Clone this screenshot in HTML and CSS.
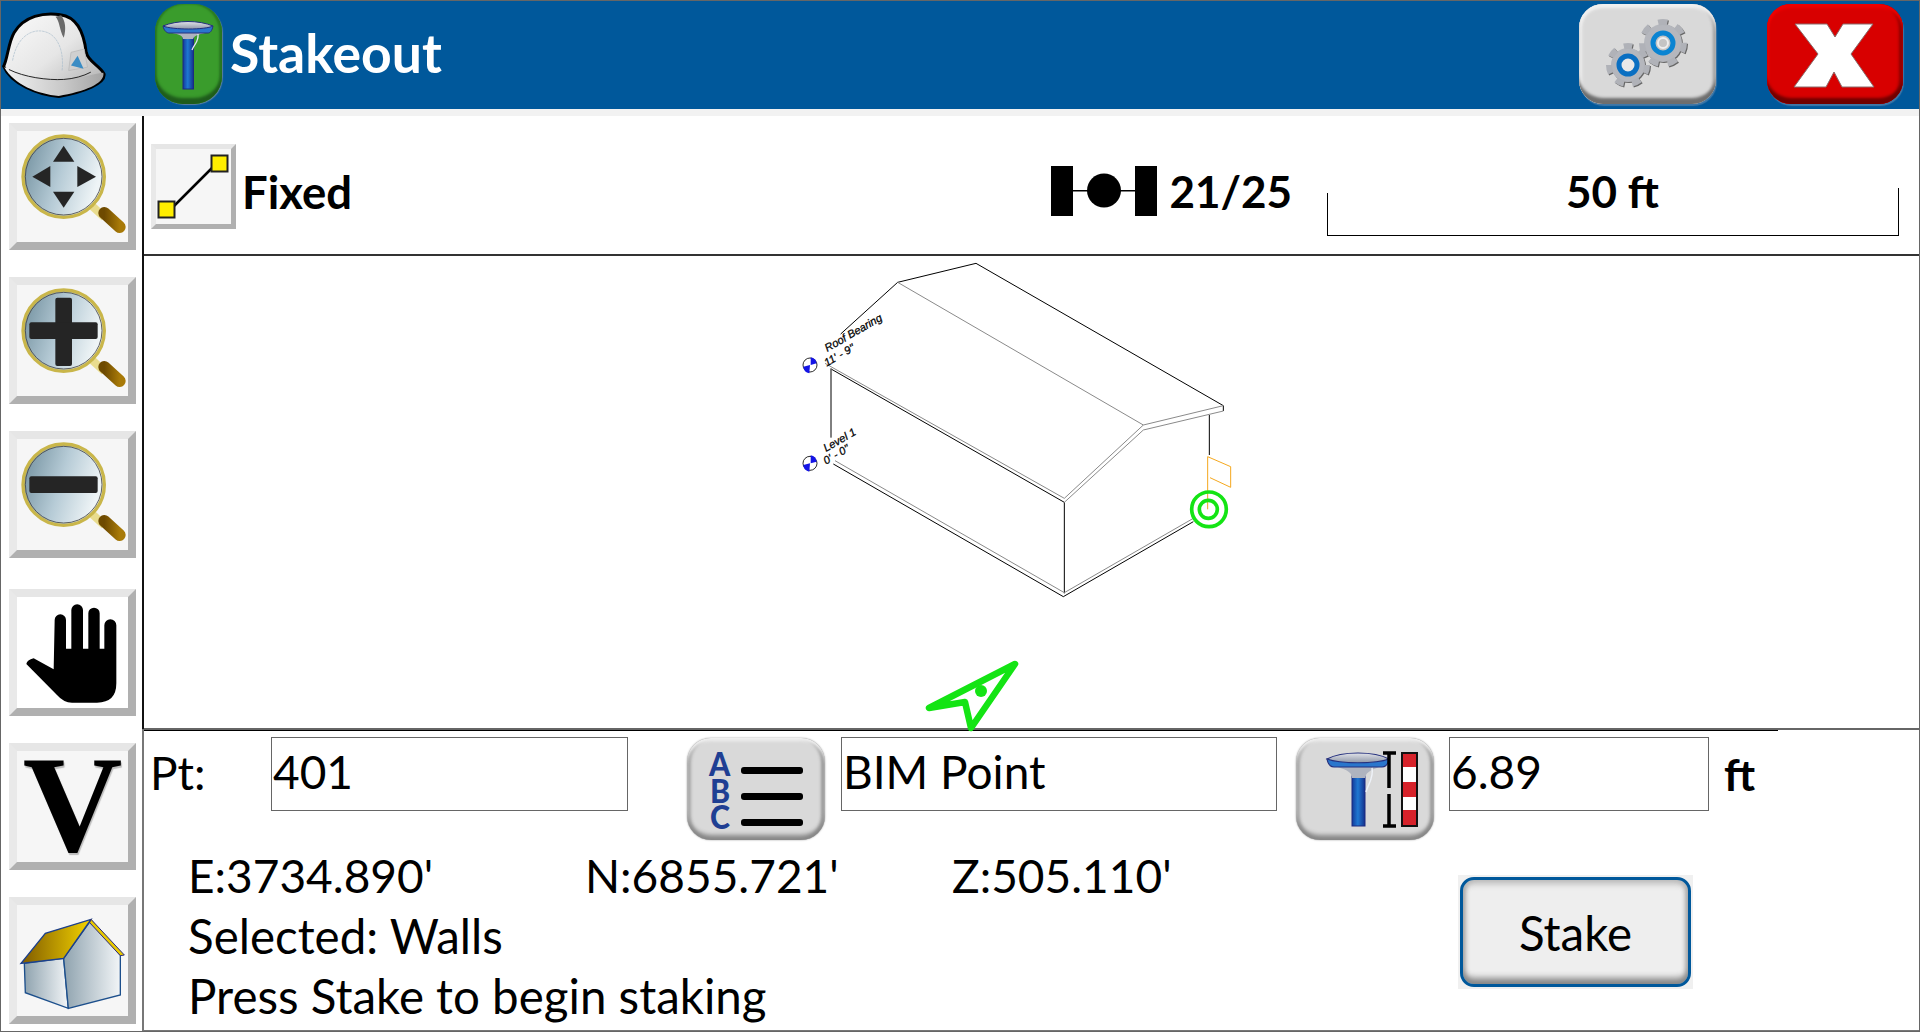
FILE: index.html
```html
<!DOCTYPE html>
<html lang="en">
<head>
    <meta charset="UTF-8">
    <title>Stakeout</title>
    <link rel="stylesheet" href="styles.css">
</head>
<body>
<div class="app">
    <header class="topbar">
        <!-- hard hat -->
        <svg class="helmet" viewBox="0 20 318 270">
            <defs>
                <linearGradient id="hatGrad" x1="0" y1="0" x2="1" y2="1">
                    <stop offset="0" stop-color="#fbfbfb"/>
                    <stop offset="0.5" stop-color="#e6e6e6"/>
                    <stop offset="1" stop-color="#a8a8a8"/>
                </linearGradient>
                <linearGradient id="brimGrad" x1="0" y1="0" x2="1" y2="0">
                    <stop offset="0" stop-color="#f2f2f2"/>
                    <stop offset="0.6" stop-color="#c8c8c8"/>
                    <stop offset="1" stop-color="#a4a4a4"/>
                </linearGradient>
                <linearGradient id="lensGrad" x1="0" y1="0" x2="1" y2="0.3">
                    <stop offset="0" stop-color="#6c8b9a"/>
                    <stop offset="0.55" stop-color="#b6cbd6"/>
                    <stop offset="1" stop-color="#eef4f6"/>
                </linearGradient>
                <linearGradient id="handleGrad" x1="0" y1="0" x2="1" y2="0">
                    <stop offset="0" stop-color="#6e4a00"/>
                    <stop offset="1" stop-color="#a87a08"/>
                </linearGradient>
                <linearGradient id="poleGrad" x1="0" y1="0" x2="1" y2="0">
                    <stop offset="0" stop-color="#123a9a"/>
                    <stop offset="0.45" stop-color="#1f78d2"/>
                    <stop offset="1" stop-color="#14308c"/>
                </linearGradient>
                <linearGradient id="dishGrad" x1="0" y1="0" x2="0" y2="1">
                    <stop offset="0" stop-color="#e2e4ea"/>
                    <stop offset="1" stop-color="#8f97a8"/>
                </linearGradient>
                <linearGradient id="roofGrad" x1="0" y1="0" x2="1" y2="0">
                    <stop offset="0" stop-color="#7f5a00"/>
                    <stop offset="1" stop-color="#f4d400"/>
                </linearGradient>
                <linearGradient id="wallGrad" x1="0" y1="0" x2="1" y2="0">
                    <stop offset="0" stop-color="#8fa3af"/>
                    <stop offset="1" stop-color="#f2f5f7"/>
                </linearGradient>
                <symbol id="lens" viewBox="0 0 333 333">
                    <path d="M222 222 L262 259" stroke="#e9dc8e" stroke-width="24"/>
                    <path d="M262 246 L308 288" stroke="url(#handleGrad)" stroke-width="36" stroke-linecap="round"/>
                    <circle cx="140" cy="137" r="122" fill="url(#lensGrad)" stroke="#c9b64a" stroke-width="10"/>
                    <circle cx="140" cy="137" r="115" fill="none" stroke="#444" stroke-width="2.5"/>
                </symbol>
            </defs>
            <path d="M8 192 C20 170 22 120 40 90 C70 40 130 28 180 36 C225 42 250 80 258 150 C265 180 300 190 312 215 C318 245 250 270 175 284 C110 278 30 245 8 192 Z" fill="url(#hatGrad)" stroke="#000" stroke-width="9"/>
            <path d="M24 200 C70 225 140 235 190 232 C240 228 280 215 310 212 C316 245 250 270 175 282 C110 276 40 248 10 195 Z" fill="url(#brimGrad)"/>
            <path d="M24 202 C70 225 140 235 190 232 C220 230 250 222 272 210" fill="none" stroke="#222" stroke-width="3"/>
            <path d="M165 42 C178 55 176 80 190 106 C198 80 195 55 182 38 Z" fill="#6a6a6a"/>
            <path d="M35 175 C50 90 110 70 150 95 C180 115 190 160 185 205" fill="none" stroke="#a8bccb" stroke-width="2" stroke-dasharray="8 2"/>
            <path d="M205 205 L212 150 L252 140 L262 195 Z" fill="#d0d0d0" stroke="#b4b4b4" stroke-width="2"/>
            <path d="M212 190 L232 160 L250 200 Z" fill="#3a8cc4"/>
        </svg>

        <div class="btn-3d btn-green">
            <svg class="rod-icon" viewBox="0 0 67 100">
                <rect x="28" y="33" width="10.5" height="52" fill="url(#poleGrad)" stroke="#1c2a80" stroke-width="1"/>
                <path d="M13 28 C22 30 28 31 28 35 L38 35 C39 31 46 30 54 28 Z" fill="#aeb3bf"/>
                <path d="M8 22 C9 27 12 29 14 29 L53 29 C55 29 57 27 58 22 Z" fill="#2a76cc" stroke="#25307e" stroke-width="1"/>
                <path d="M8 22 C22 16 44 16 58 22 C50 26 18 26 8 22 Z" fill="url(#dishGrad)" stroke="#25307e" stroke-width="1"/>
                <path d="M43 30 C44 38 39 40 37 46" fill="none" stroke="#e0e6f0" stroke-width="1.3"/>
            </svg>
        </div>
        <h1 class="title">Stakeout</h1>

        <div class="btn-3d btn-gear">
            <svg class="gear-icon" viewBox="0 0 137 100">
                <circle cx="49" cy="61" r="17" fill="#b5b7bd"/>
                <circle cx="49" cy="61" r="19" fill="none" stroke="#b0b2b8" stroke-width="6" pathLength="70" stroke-dasharray="5 5"/>
                <circle cx="49" cy="61" r="9" fill="#e8e8e8" stroke="#0a6fc2" stroke-width="5"/>
                <circle cx="84" cy="39" r="19" fill="#b5b7bd"/>
                <circle cx="84" cy="39" r="21" fill="none" stroke="#b0b2b8" stroke-width="6" pathLength="80" stroke-dasharray="5.7 5.7"/>
                <circle cx="84" cy="39" r="10" fill="#c4c4c4" stroke="#0a84d2" stroke-width="5"/>
                <circle cx="84" cy="39" r="5" fill="none" stroke="#eee" stroke-width="2"/>
            </svg>
        </div>
        <div class="btn-3d btn-close">
            <svg class="close-icon" viewBox="0 0 136 100">
                <polygon points="28,20 60,20 68,33 76,20 106,20 84,50 107,83 75,83 67,68 59,83 27,83 51,50" fill="#fff" stroke="#8a6a6a" stroke-width="1"/>
            </svg>
        </div>
    </header>
    <div class="strip"></div>

    <div class="main">
        <aside class="sidebar">
            <div class="tool">
                <svg class="tool-svg" viewBox="0 0 333 333">
                    <use href="#lens"/>
                    <g fill="#252525">
                        <polygon points="140,44 108,92 172,92"/>
                        <polygon points="140,230 108,182 172,182"/>
                        <polygon points="46,137 100,105 100,168"/>
                        <polygon points="237,137 181,105 181,168"/>
                    </g>
                </svg>
            </div>
            <div class="tool tool-2">
                <svg class="tool-svg" viewBox="0 0 333 333">
                    <use href="#lens"/>
                    <rect x="115" y="38" width="50" height="205" rx="6" fill="#252525"/>
                    <rect x="37" y="112" width="205" height="50" rx="6" fill="#252525"/>
                </svg>
            </div>
            <div class="tool tool-3">
                <svg class="tool-svg" viewBox="0 0 333 333">
                    <use href="#lens"/>
                    <rect x="37" y="112" width="205" height="50" rx="6" fill="#252525"/>
                </svg>
            </div>
            <div class="tool tool-4 tool-white">
                <svg class="tool-svg" viewBox="50 1011 333 333">
                    <path d="M78 1212 Q80 1200 100 1195 L160 1228 L163 1080 a17 17 0 0 1 34 0 L197 1166 L213 1166 L213 1050 a17.5 17.5 0 0 1 35 0 L248 1166 L264 1166 L264 1060 a17 17 0 0 1 34 0 L298 1166 L312 1166 L312 1096 a18 18 0 0 1 36 0 L348 1270 Q348 1328 290 1328 L215 1328 Q190 1328 170 1305 Z" fill="#000"/>
                </svg>
            </div>
            <div class="tool tool-5"><span class="v-letter">V</span></div>
            <div class="tool tool-6">
                <svg class="tool-svg" viewBox="50 525 333 333">
                    <polygon points="72,700 190,685 204,835 75,788" fill="url(#wallGrad)" stroke="#1c4f8c" stroke-width="4"/>
                    <polygon points="190,685 272,570 360,675 360,795 204,835" fill="url(#wallGrad)" stroke="#1c4f8c" stroke-width="4"/>
                    <polygon points="62,700 135,610 272,568 190,685" fill="url(#roofGrad)" stroke="#1c3f8c" stroke-width="4"/>
                    <polygon points="272,568 372,675 360,677 268,578" fill="#e8c800" stroke="#2c2c7c" stroke-width="3"/>
                </svg>
            </div>
        </aside>

        <section class="content">
            <div class="info-bar">
                <div class="tool tool-small">
                    <svg class="tool-svg" viewBox="0 0 75 75">
                        <path d="M14 61 L61 14" stroke="#000" stroke-width="2.5"/>
                        <rect x="2.5" y="52.5" width="16" height="16" fill="#ffee00" stroke="#222" stroke-width="2"/>
                        <rect x="55.5" y="6.5" width="16" height="16" fill="#ffee00" stroke="#222" stroke-width="2"/>
                    </svg>
                </div>
                <span class="bold-text fixed-label">Fixed</span>
                <div class="sat-group">
                    <svg class="sat-icon" viewBox="0 0 106 50">
                        <rect x="0" y="0" width="22" height="50"/>
                        <rect x="84" y="0" width="22" height="50"/>
                        <rect x="20" y="24" width="66" height="1.5"/>
                        <ellipse cx="53" cy="24.5" rx="17" ry="17"/>
                    </svg>
                    <span class="bold-text">21/25</span>
                </div>
                <div class="scale"><span class="bold-text">50 ft</span></div>
            </div>

            <div class="map">
                <svg class="drawing" viewBox="0 0 1440 1080">
                    <g fill="none" stroke="#000" stroke-width="3">
                        <path d="M353 97 L588 40 L1330 467 L1330 483"/>
                        <path d="M353 97 L182 252"/>
                        <path d="M153 355 L153 563"/>
                        <path d="M853 757 L853 1030"/>
                        <path d="M1288 495 L1288 615"/>
                        <path d="M160 642 L850 1040 L1240 815"/>
                        <path d="M155 358 L853 757"/>
                    </g>
                    <g fill="none" stroke="#8a8a8a" stroke-width="3">
                        <path d="M353 97 L1090 525 L1330 467"/>
                        <path d="M135 340 L853 745 L1090 525"/>
                        <path d="M853 757 L1090 540 L1330 483"/>
                        <path d="M165 632 L853 1028 L1240 805"/>
                    </g>
                    <g class="level-text">
                        <text transform="translate(142 306) rotate(-30)">Roof Bearing</text>
                        <text transform="translate(140 350) rotate(-30)">11' - 9"</text>
                        <text transform="translate(138 606) rotate(-30)">Level 1</text>
                        <text transform="translate(138 644) rotate(-30)">0' - 0"</text>
                    </g>
                    <g fill="none" stroke="#000" stroke-width="2.5">
                        <circle cx="90" cy="345" r="21"/>
                        <circle cx="90" cy="640" r="21"/>
                    </g>
                    <g fill="#1414e6">
                        <path d="M92 322 A22 22 0 0 1 110 340 L92 345 Z"/>
                        <path d="M70 350 A22 22 0 0 0 88 370 L90 345 Z"/>
                        <path d="M92 616 A22 22 0 0 1 110 635 L92 640 Z"/>
                        <path d="M70 645 A22 22 0 0 0 88 665 L90 640 Z"/>
                    </g>
                    <g fill="none" stroke="#f5a81e" stroke-width="3">
                        <path d="M1283 778 L1283 620 L1352 650 L1352 712 L1290 683"/>
                    </g>
                    <g fill="none" stroke="#14e414" stroke-width="11">
                        <circle cx="1287" cy="778" r="52"/>
                        <circle cx="1285" cy="778" r="27"/>
                    </g>
                </svg>
                <svg class="nav-arrow" viewBox="0 0 100 72">
                    <polygon points="92,4 6,48 42,42 48,68" fill="none" stroke="#14e414" stroke-width="6.5" stroke-linejoin="round"/>
                    <circle cx="58" cy="31" r="6" fill="#14e414"/>
                </svg>
            </div>

            <div class="rule"></div>
            <div class="panel">
                <div class="field-row">
                    <span class="lbl lbl-pt">Pt:</span>
                    <div class="field field-pt">401</div>
                    <div class="btn-3d btn-light btn-list">
                        <svg class="tool-svg" viewBox="0 0 138 102">
                            <g class="abc-text">
                                <text transform="translate(22 38) scale(0.92 1)">A</text>
                                <text transform="translate(23 65) scale(0.92 1)">B</text>
                                <text transform="translate(23 91) scale(0.92 1)">C</text>
                            </g>
                            <g fill="#000">
                                <rect x="54" y="29" width="62" height="7" rx="3"/>
                                <rect x="54" y="55" width="62" height="7" rx="3"/>
                                <rect x="54" y="81" width="62" height="7" rx="3"/>
                            </g>
                        </svg>
                    </div>
                    <div class="field field-desc">BIM Point</div>
                    <div class="btn-3d btn-light btn-rod">
                        <svg class="tool-svg" viewBox="0 0 138 102">
                            <rect x="56" y="38" width="13" height="50" fill="url(#poleGrad)" stroke="#1c2a80" stroke-width="1"/>
                            <path d="M38 28 C48 31 56 33 56 40 L69 40 C70 33 78 31 86 28 Z" fill="#aeb3bf"/>
                            <path d="M31 21 C32 26 35 29 38 29 L86 29 C90 29 92 26 93 21 Z" fill="#2a76cc" stroke="#25307e" stroke-width="1.2"/>
                            <path d="M31 21 C46 13 78 13 93 21 C80 26 44 26 31 21 Z" fill="url(#dishGrad)" stroke="#25307e" stroke-width="1.2"/>
                            <path d="M76 30 C78 40 72 46 70 54" fill="none" stroke="#eef2f8" stroke-width="1.5"/>
                            <path d="M87 15 L100 15 M93 15 L93 50 M93 56 L93 88 M87 88 L100 88" stroke="#000" stroke-width="3.5" fill="none"/>
                            <rect x="106" y="15" width="15" height="73" fill="#fff" stroke="#111" stroke-width="2"/>
                            <rect x="107" y="16" width="13" height="13" fill="#d6222a"/>
                            <rect x="107" y="44" width="13" height="15" fill="#d6222a"/>
                            <rect x="107" y="72" width="13" height="15" fill="#d6222a"/>
                        </svg>
                    </div>
                    <div class="field field-height">6.89</div>
                    <span class="bold-text unit">ft</span>
                </div>
                <div class="lower">
                    <div class="status">
                        <div class="coords">
                            <span class="coord-e">E:3734.890'</span>
                            <span class="coord-n">N:6855.721'</span>
                            <span>Z:505.110'</span>
                        </div>
                        <div class="msg">Selected: Walls</div>
                        <div class="msg">Press Stake to begin staking</div>
                    </div>
                    <div class="stake-wrap"><div class="stake">Stake</div></div>
                </div>
            </div>
        </section>
    </div>
</div>
</body>
</html>
```

FILE: styles.css
```css
* {
    box-sizing: border-box;
}
body {
    margin: 0;
    background: #fff;
    font-family: "Lato", "Open Sans", sans-serif;
    color: #000;
}
.app {
    width: 1920px;
    height: 1032px;
    border: 1px solid #666;
    display: flex;
    flex-direction: column;
    overflow: hidden;
}
.topbar {
    height: 108px;
    background: #00589b;
    display: flex;
    align-items: center;
    padding: 0 16px 2px 0;
}
.helmet {
    width: 105px;
    height: 90px;
    flex: none;
}
.title {
    margin: 0 0 4px 8px;
    color: #fff;
    font-size: 53.5px;
    font-weight: 700;
    flex: 1;
}
.strip {
    height: 7px;
    background: #f2f2f2;
}
.btn-3d {
    flex: none;
    height: 100px;
    border-radius: 24px;
}
.btn-3d svg {
    display: block;
    width: 100%;
    height: 100%;
}
.btn-green {
    width: 67px;
    margin-left: 49px;
    border-radius: 28px;
    background: #3a9c2c;
    box-shadow: inset 0 -7px 3px -1px #1f5c1c, inset -3px 0 2px #2a7a22, inset 2px 0 2px #2a7a22, 1px 1px 1px #5a7fa0;
}
.btn-gear {
    width: 137px;
    background: #d9d9d9;
    box-shadow: inset 0 -7px 3px -1px #6e6e6e, inset 0 4px 3px #f0f0f0, inset -3px 0 3px #999, inset 3px 0 3px #eee, 1px 2px 1px #3f78a8;
}
.gear-icon {
    filter: drop-shadow(1px 1px 0 #666);
}
.btn-close {
    width: 136px;
    margin-left: 51px;
    background: #d80000;
    box-shadow: inset 0 -7px 3px -1px #700000, inset 0 4px 3px #f00000, inset -4px 0 3px #8a0000, inset 2px 0 2px #f00000, 1px 2px 1px #3f78a8;
}
.main {
    flex: 1;
    display: flex;
    min-height: 0;
}
.sidebar {
    width: 143px;
    flex: none;
    border-right: 2px solid;
    border-image: linear-gradient(to bottom, #111 613px, #777 613px) 1;
    padding: 7px 0 0 8px;
}
.tool {
    width: 127px;
    height: 127px;
    border: 8px solid;
    border-color: #e6e6e6 #b0b0b0 #b0b0b0 #e9e9e9;
    background: #f6f6f6;
}
.tool-white {
    background: #fff;
}
.tool-2, .tool-3 {
    margin-top: 27px;
}
.tool-4 {
    margin-top: 31px;
}
.tool-5 {
    margin-top: 27px;
    display: flex;
    justify-content: center;
}
.tool-6 {
    margin-top: 27px;
}
.tool-svg {
    display: block;
    width: 100%;
    height: 100%;
}
.v-letter {
    font-family: "Liberation Serif", serif;
    font-weight: 700;
    font-size: 138px;
    line-height: 108px;
    text-shadow: 1px 2px 1px #bbb;
}
.content {
    flex: 1;
    min-width: 0;
    display: flex;
    flex-direction: column;
}
.info-bar {
    height: 140px;
    border-bottom: 2px solid #333;
    display: flex;
    align-items: center;
    padding: 2px 20px 0 7px;
}
.tool-small {
    width: 85px;
    height: 85px;
    border-width: 5px;
    flex: none;
}
.bold-text {
    font-size: 44px;
    font-weight: 700;
}
.fixed-label {
    margin: 10px 0 0 6px;
    font-size: 45.5px;
}
.sat-group {
    margin: 9px 35px 0 auto;
    display: flex;
    align-items: center;
    gap: 12px;
}
.sat-icon {
    width: 106px;
    height: 50px;
}
.scale {
    width: 572px;
    height: 48px;
    align-self: flex-end;
    margin-bottom: 18px;
    padding-bottom: 41px;
    border-right: 1px solid #000;
    border-bottom: 1px solid #000;
    background: linear-gradient(#000, #000) left bottom / 1px 42px no-repeat;
    display: flex;
    justify-content: center;
    align-items: center;
}
.map {
    height: 474px;
    position: relative;
    border-bottom: 2px solid #666;
}
.drawing {
    position: absolute;
    left: 636px;
    top: -6px;
    width: 480px;
    height: 360px;
}
.level-text text {
    font-family: "Liberation Sans", sans-serif;
    font-style: italic;
    font-size: 33px;
    stroke: #000;
    stroke-width: 0.8;
}
.nav-arrow {
    position: absolute;
    left: 779px;
    top: 404px;
    width: 100px;
    height: 72px;
}
.rule {
    width: 1634px;
    height: 1px;
    flex: none;
    background: #000;
}
.panel {
    flex: 1;
    font-size: 46px;
    padding: 6px 0 0 6px;
    border-bottom: 1px solid #777;
}
.field-row {
    display: flex;
    align-items: flex-start;
}
.lbl-pt {
    width: 121px;
    flex: none;
    line-height: 72px;
}
.field {
    height: 74px;
    line-height: 68px;
    padding-left: 1px;
    border: 1px solid #666;
    flex: none;
}
.field-pt {
    width: 357px;
}
.btn-light {
    width: 138px;
    height: 102px;
    background: #d9d9d9;
    box-shadow: inset 0 -6px 4px -1px #888, inset 0 3px 3px #f2f2f2, inset -4px 0 3px #999, inset 4px 0 3px #aaa, 0 0 2px #999;
}
.btn-list {
    margin-left: 59px;
    margin-top: 1px;
}
.field-desc {
    width: 436px;
    margin-left: 16px;
}
.btn-rod {
    margin-left: 19px;
    margin-top: 1px;
}
.field-height {
    width: 260px;
    margin-left: 15px;
}
.unit {
    margin-left: 15px;
    line-height: 75px;
}
.abc-text text {
    font-family: "Lato", sans-serif;
    font-weight: 900;
    font-size: 33px;
    fill: #1f3f93;
}
.lower {
    display: flex;
    margin-top: 6px;
    padding-left: 38px;
}
.status {
    width: 1270px;
    flex: none;
    line-height: 60px;
}
.coords {
    display: flex;
}
.coord-e {
    width: 397px;
}
.coord-n {
    width: 367px;
}
.msg {
    font-size: 47.5px;
}
.stake-wrap {
    width: 235px;
    height: 114px;
    margin-top: 29px;
    padding: 2px;
    background: #f0f0f0;
    font-size: 47.5px;
}
.stake {
    height: 110px;
    border: 3px solid #00589b;
    border-radius: 14px;
    background: #eee;
    box-shadow: inset 0 -10px 6px -4px #888, inset 0 10px 6px -6px #bbb, inset 5px 0 4px -2px #aaa, inset -5px 0 4px -2px #aaa;
    display: flex;
    align-items: center;
    justify-content: center;
}
```
